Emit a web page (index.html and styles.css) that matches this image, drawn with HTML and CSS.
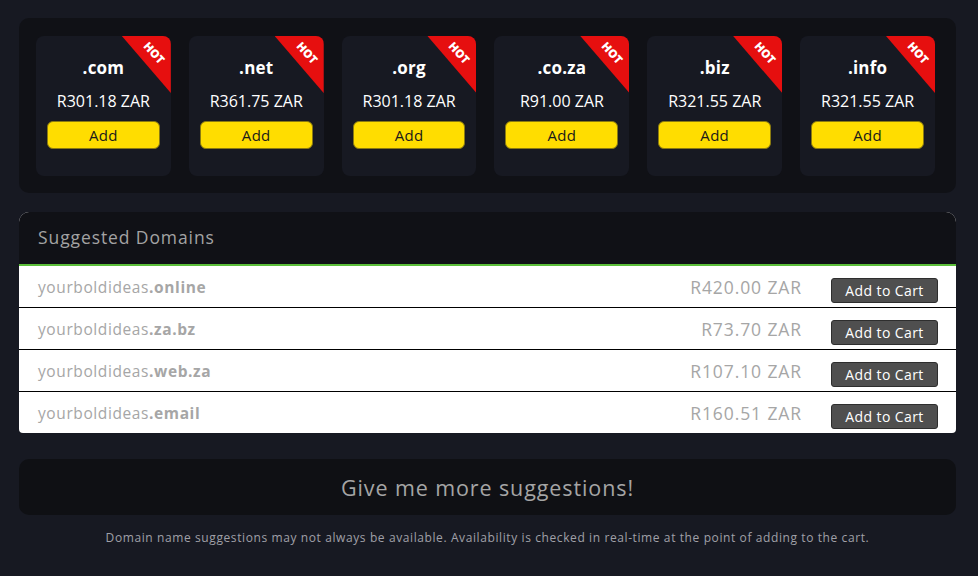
FILE: index.html
```html
<!DOCTYPE html>
<html lang="en">
<head>
    <meta charset="UTF-8">
    <title>Domain Search</title>
    <link rel="stylesheet" href="styles.css">
</head>
<body>
    <div class="page">
        <div class="spotlight">
            <div class="tld-card">
                <span class="hot"><span>HOT</span></span>
                <div class="tld">.com</div>
                <div class="tld-price">R301.18 ZAR</div>
                <button class="btn-add">Add</button>
            </div>
            <div class="tld-card">
                <span class="hot"><span>HOT</span></span>
                <div class="tld">.net</div>
                <div class="tld-price">R361.75 ZAR</div>
                <button class="btn-add">Add</button>
            </div>
            <div class="tld-card">
                <span class="hot"><span>HOT</span></span>
                <div class="tld">.org</div>
                <div class="tld-price">R301.18 ZAR</div>
                <button class="btn-add">Add</button>
            </div>
            <div class="tld-card">
                <span class="hot"><span>HOT</span></span>
                <div class="tld">.co.za</div>
                <div class="tld-price">R91.00 ZAR</div>
                <button class="btn-add">Add</button>
            </div>
            <div class="tld-card">
                <span class="hot"><span>HOT</span></span>
                <div class="tld">.biz</div>
                <div class="tld-price">R321.55 ZAR</div>
                <button class="btn-add">Add</button>
            </div>
            <div class="tld-card">
                <span class="hot"><span>HOT</span></span>
                <div class="tld">.info</div>
                <div class="tld-price">R321.55 ZAR</div>
                <button class="btn-add">Add</button>
            </div>
        </div>

        <div class="suggestions">
            <div class="suggestions-head">Suggested Domains</div>
            <ul class="suggestion-list">
                <li>
                    <span class="domain">yourboldideas<b>.online</b></span>
                    <span class="price">R420.00 ZAR</span>
                    <button class="btn-cart">Add to Cart</button>
                </li>
                <li>
                    <span class="domain">yourboldideas<b>.za.bz</b></span>
                    <span class="price">R73.70 ZAR</span>
                    <button class="btn-cart">Add to Cart</button>
                </li>
                <li>
                    <span class="domain">yourboldideas<b>.web.za</b></span>
                    <span class="price">R107.10 ZAR</span>
                    <button class="btn-cart">Add to Cart</button>
                </li>
                <li>
                    <span class="domain">yourboldideas<b>.email</b></span>
                    <span class="price">R160.51 ZAR</span>
                    <button class="btn-cart">Add to Cart</button>
                </li>
            </ul>
        </div>

        <button class="more">Give me more suggestions!</button>

        <p class="note">Domain name suggestions may not always be available. Availability is checked in real-time at the point of adding to the cart.</p>
    </div>
</body>
</html>
```

FILE: styles.css
```css
body {
    font-family: "Open Sans", Arial, sans-serif;
    background-color: #171922;
    color: #fff;
    margin: 0;
}
.page {
    width: 937px;
    margin-left: 19px;
    padding-top: 18px;
}
.spotlight {
    background-color: #101116;
    border-radius: 10px;
    padding: 18px 21px 17px 17px;
    display: grid;
    grid-template-columns: repeat(6, 1fr);
    gap: 18px;
}
.tld-card {
    position: relative;
    overflow: hidden;
    background-color: #171922;
    border-radius: 8px;
    height: 140px;
    box-sizing: border-box;
    padding: 19px 11px 0;
    text-align: center;
}
/* red corner triangle */
.hot {
    position: absolute;
    top: 0;
    right: 0;
    width: 49px;
    height: 57px;
    background-color: #e60f0f;
    clip-path: polygon(0 0, 100% 0, 100% 100%);
}
.hot span {
    position: absolute;
    top: 11px;
    right: -1px;
    width: 36px;
    color: #fff;
    font-size: 11.5px;
    font-weight: 800;
    line-height: 12px;
    text-align: center;
    transform: rotate(48deg);
}
.tld {
    font-size: 17px;
    font-weight: 700;
    line-height: 26px;
    letter-spacing: 0.2px;
}
.tld-price {
    font-size: 16px;
    line-height: 22px;
    margin-top: 9px;
}
.btn-add {
    display: block;
    width: 100%;
    height: 28px;
    margin-top: 9px;
    background-color: #ffdd00;
    border: 1px solid #8a7a10;
    border-radius: 6px;
    font-family: inherit;
    font-size: 15px;
    letter-spacing: 0.3px;
    color: #1a1a1a;
    cursor: pointer;
}
.suggestions {
    margin-top: 19px;
    border-radius: 10px 10px 4px 4px;
    overflow: hidden;
    background-color: #fff;
}
.suggestions-head {
    background-color: #101116;
    color: #a3a3a3;
    font-size: 17.5px;
    letter-spacing: 0.9px;
    height: 52px;
    line-height: 50px;
    padding-left: 19px;
    border-bottom: 2px solid #5cbf3a;
}
.suggestion-list {
    list-style-type: none;
    margin: 0;
    padding: 0;
}
.suggestion-list li {
    display: flex;
    align-items: center;
    height: 41px;
    padding: 0 18px 0 19px;
    border-top: 1px solid #000;
    color: #a6a6a6;
}
.suggestion-list li:first-child {
    border-top: none;
}
.domain {
    flex: 1;
    font-size: 15.5px;
    letter-spacing: 0.6px;
}
.domain b {
    font-weight: 700;
}
.price {
    font-size: 17.5px;
    letter-spacing: 0.9px;
    margin-right: 29px;
}
.btn-cart {
    width: 107px;
    height: 25px;
    margin-top: 7px;
    background-color: #4f4f4f;
    border: 1px solid #2e2e2e;
    border-radius: 3px;
    color: #fff;
    font-family: inherit;
    font-size: 14px;
    letter-spacing: 0.4px;
    padding: 0;
    cursor: pointer;
}
.more {
    display: block;
    width: 100%;
    height: 56px;
    margin-top: 26px;
    background-color: #0f1014;
    border: none;
    border-radius: 10px;
    color: #a5a5a5;
    font-family: inherit;
    font-size: 21.5px;
    letter-spacing: 0.9px;
    cursor: pointer;
}
.note {
    margin: 14px 0 0;
    text-align: center;
    font-size: 12px;
    letter-spacing: 0.6px;
    color: #a0a0a8;
}
```
